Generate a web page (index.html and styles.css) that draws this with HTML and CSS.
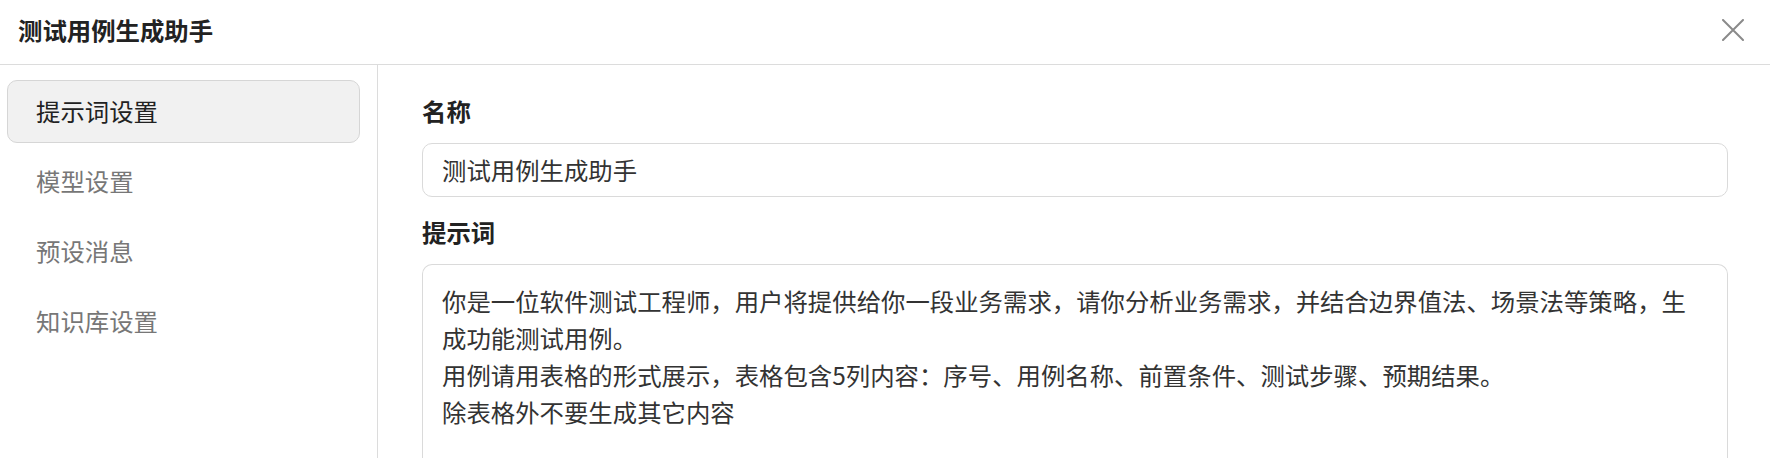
FILE: index.html
```html
<!DOCTYPE html>
<html lang="zh-CN">
<head>
<meta charset="utf-8">
<title>测试用例生成助手</title>
<link rel="stylesheet" href="styles.css">
</head>
<body>
<div class="dialog">
  <header class="header">
    <h1 class="title">测试用例生成助手</h1>
    <button class="close" aria-label="关闭">
      <svg width="22" height="22" viewBox="0 0 22 22"><path d="M1 1 L21 21 M21 1 L1 21" stroke="#8a8a8a" stroke-width="2" fill="none" stroke-linecap="round"/></svg>
    </button>
  </header>
  <div class="body">
    <nav class="sidebar">
      <div class="nav-item active">提示词设置</div>
      <div class="nav-item">模型设置</div>
      <div class="nav-item">预设消息</div>
      <div class="nav-item">知识库设置</div>
    </nav>
    <main class="main">
      <div class="label">名称</div>
      <div class="input">测试用例生成助手</div>
      <div class="label label-second">提示词</div>
      <div class="textarea">你是一位软件测试工程师，用户将提供给你一段业务需求，请你分析业务需求，并结合边界值法、场景法等策略，生成功能测试用例。
用例请用表格的形式展示，表格包含5列内容：序号、用例名称、前置条件、测试步骤、预期结果。
除表格外不要生成其它内容</div>
    </main>
  </div>
</div>
</body>
</html>
```
FILE: styles.css
```css
* { box-sizing: border-box; }
html, body {
  margin: 0;
  padding: 0;
  background: #fff;
}
body {
  font-family: "Noto Sans CJK SC", "Noto Sans", sans-serif;
  font-size: 24.4px;
  color: #222;
  width: 1770px;
  height: 458px;
  overflow: hidden;
}
.dialog {
  display: flex;
  flex-direction: column;
  height: 100%;
}
.header {
  height: 65px;
  border-bottom: 1px solid #dcdcdc;
  display: flex;
  align-items: center;
  justify-content: space-between;
  padding: 0 26px 4px 18px;
  flex-shrink: 0;
}
.title {
  margin: 0;
  font-size: 24.4px;
  font-weight: 700;
  line-height: 30px;
  color: #222;
}
.close {
  border: none;
  background: none;
  padding: 0;
  width: 22px;
  height: 22px;
  display: flex;
  cursor: pointer;
}
.body {
  flex: 1;
  display: flex;
  min-height: 0;
}
.sidebar {
  width: 378px;
  flex-shrink: 0;
  border-right: 1px solid #dcdcdc;
  padding: 15px 17px 0 7px;
  display: flex;
  flex-direction: column;
  gap: 7px;
}
.nav-item {
  height: 63px;
  flex-shrink: 0;
  display: flex;
  align-items: center;
  padding-left: 28px;
  color: #777;
  border: 1px solid transparent;
  border-radius: 10px;
  line-height: 1;
}
.nav-item.active {
  background: #f1f1f1;
  border-color: #d6d6d6;
  color: #222;
}
.main {
  flex: 1;
  padding: 28px 42px 0 44px;
  display: flex;
  flex-direction: column;
  min-width: 0;
  min-height: 0;
}
.label {
  font-weight: 700;
  line-height: 36px;
  height: 36px;
  flex-shrink: 0;
  margin-bottom: 14px;
}
.label-second {
  margin-top: 17px;
}
.input {
  height: 54px;
  flex-shrink: 0;
  border: 1px solid #dadada;
  border-radius: 10px;
  padding: 0 19px;
  display: flex;
  align-items: center;
  color: #333;
  line-height: 1;
}
.textarea {
  flex: 1;
  min-height: 0;
  overflow: hidden;
  border: 1px solid #dadada;
  border-bottom: none;
  border-radius: 10px 10px 0 0;
  padding: 17px 19px 0 19px;
  line-height: 37px;
  color: #333;
  white-space: pre-wrap;
}
```
